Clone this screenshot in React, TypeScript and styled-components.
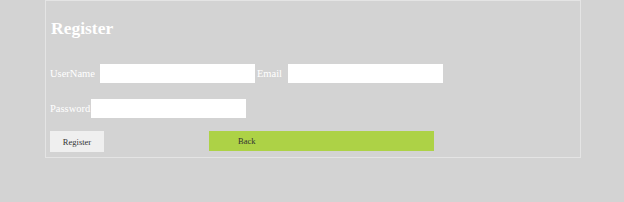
import styled, { createGlobalStyle } from "styled-components";

const GlobalStyle = createGlobalStyle`
  html, body {
    margin: 0;
    padding: 0;
    background: #d3d3d3;
    font-family: "Liberation Serif", "Times New Roman", serif;
  }
`;

const Page = styled.div`
  width: 624px;
  height: 202px;
  background: #d3d3d3;
`;

const Panel = styled.form`
  margin-left: 45px;
  width: 530px;
  border: 1px solid #e4e4e4;
  padding: 0 0 5px 4px;
`;

const Title = styled.h2`
  margin: 18px 0 0 1px;
  font-size: 17.5px;
  line-height: 18px;
  font-weight: bold;
  color: #ffffff;
`;

const Row = styled.div<{ $top: number }>`
  display: flex;
  align-items: center;
  margin-top: ${(p) => p.$top}px;
  height: 20px;
`;

const Label = styled.label<{ $gap: number; $lead?: number }>`
  font-size: 10.5px;
  color: #ffffff;
  margin-left: ${(p) => p.$lead ?? 0}px;
  margin-right: ${(p) => p.$gap}px;
  white-space: nowrap;
`;

const Field = styled.input`
  width: 155px;
  height: 19px;
  box-sizing: border-box;
  border: none;
  background: #ffffff;
  padding: 0 3px;
  margin: 0;
  outline: none;
`;

const ButtonRow = styled.div`
  display: flex;
  align-items: flex-start;
  margin-top: 13px;
`;

const PlainButton = styled.button`
  width: 54px;
  height: 21px;
  border: none;
  background: #efefef;
  color: #333333;
  font-family: "Liberation Serif", "Times New Roman", serif;
  font-size: 8.5px;
  padding: 0;
  cursor: pointer;
`;

const BackButton = styled.a`
  display: flex;
  align-items: center;
  width: 225px;
  height: 20px;
  margin-left: 105px;
  padding-left: 29px;
  box-sizing: border-box;
  background: #add246;
  color: #333333;
  font-size: 8.5px;
  text-decoration: none;
  cursor: pointer;
`;

export default function App() {
  return (
    <>
      <GlobalStyle />
      <Page>
        <Panel onSubmit={(e) => e.preventDefault()}>
          <Title>Register</Title>
          <Row $top={26}>
            <Label $gap={5}>UserName</Label>
            <Field type="text" />
            <Label $lead={2} $gap={6}>Email</Label>
            <Field type="text" />
          </Row>
          <Row $top={15}>
            <Label $gap={1}>Password</Label>
            <Field type="password" />
          </Row>
          <ButtonRow>
            <PlainButton type="submit">Register</PlainButton>
            <BackButton>Back</BackButton>
          </ButtonRow>
        </Panel>
      </Page>
    </>
  );
}
